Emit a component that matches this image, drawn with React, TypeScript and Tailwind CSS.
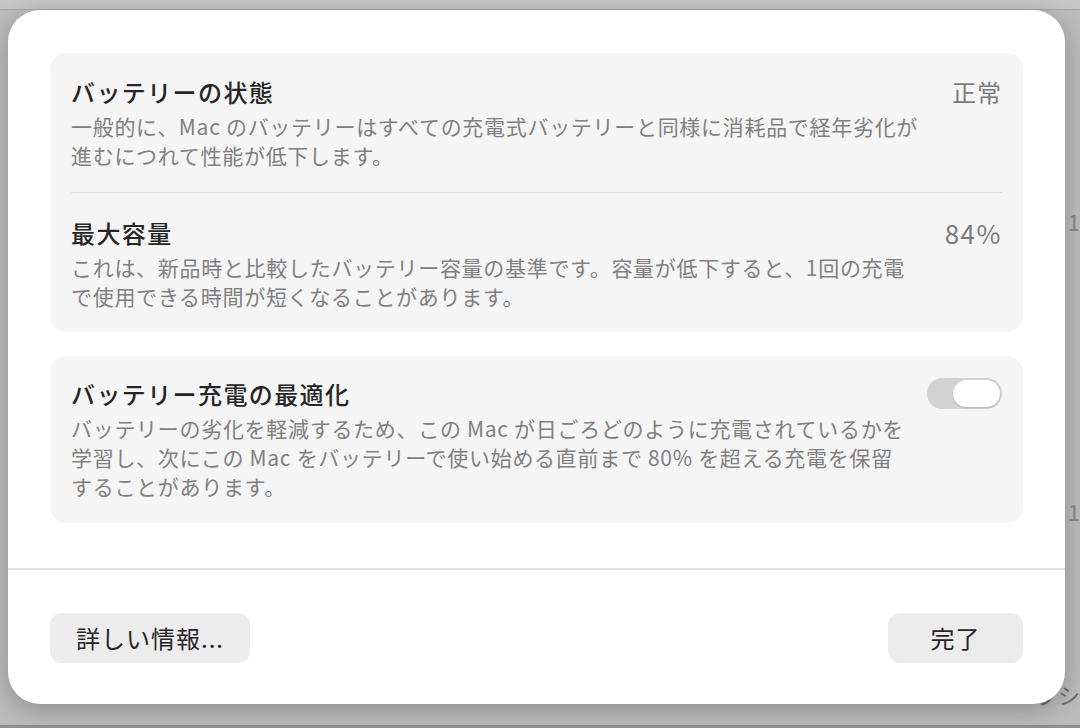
const font = { fontFamily: '"Noto Sans CJK JP", "Noto Sans", sans-serif' };

function Toggle() {
  return (
    <div className="w-[75px] h-[31px] rounded-full bg-[#d2d2d2] flex items-center justify-end pr-[2px] shrink-0">
      <div className="w-[47px] h-[27px] rounded-full bg-white shadow-[0_1px_2px_rgba(0,0,0,0.15)]" />
    </div>
  );
}

function Row({
  title,
  lines,
  value,
  className,
}: {
  title: string;
  lines: string[];
  value?: React.ReactNode;
  className?: string;
}) {
  return (
    <div className={"flex items-start justify-between " + (className ?? "")}>
      <div className="flex flex-col">
        <div className="text-[24px] leading-[32px] font-medium tracking-[1.4px] text-[#252525]">
          {title}
        </div>
        <div className="mt-[4px] text-[21px] leading-[29px] tracking-[0.7px] text-[#808080] whitespace-pre">
          {lines.map((l) => (
            <div key={l}>{l}</div>
          ))}
        </div>
      </div>
      {value}
    </div>
  );
}

export default function App() {
  return (
    <div
      className="w-[1080px] h-[728px] bg-[#bcbcbc] overflow-hidden pt-[10px] pl-[8px] relative"
      style={font}
    >
      <div className="absolute left-0 top-0 w-full h-[10px] bg-[#c6c6c6] border-b border-[#a9a9a9]" />
      <div className="absolute right-0 top-[205px] text-[22px] text-[#8a8a8a]">1</div>
      <div className="absolute right-0 top-[495px] text-[22px] text-[#8a8a8a]">1</div>
      <div className="absolute right-0 top-[678px] text-[22px] text-[#6e6e6e]">プシ</div>
      <div className="absolute left-0 bottom-0 w-full h-[3px] bg-[#8f8f8f]" />

      <div className="relative w-[1057px] h-[694px] bg-white rounded-[32px] shadow-[0_6px_24px_rgba(0,0,0,0.25)] flex flex-col">
        <div className="px-[42px] pt-[43px] flex flex-col gap-[24px]">
          <div className="bg-[#f5f5f5] rounded-[16px] px-[21px] h-[279px] flex flex-col">
            <Row
              className="pt-[23px] pb-[22px] border-b border-[#e0e0e0]"
              title="バッテリーの状態"
              lines={[
                "一般的に、Mac のバッテリーはすべての充電式バッテリーと同様に消耗品で経年劣化が",
                "進むにつれて性能が低下します。",
              ]}
              value={
                <div className="text-[24px] leading-[32px] tracking-[1px] text-[#7a7a7a]">正常</div>
              }
            />
            <Row
              className="pt-[24px]"
              title="最大容量"
              lines={[
                "これは、新品時と比較したバッテリー容量の基準です。容量が低下すると、1回の充電",
                "で使用できる時間が短くなることがあります。",
              ]}
              value={
                <div className="text-[26px] leading-[32px] tracking-[1.5px] text-[#7a7a7a]">84%</div>
              }
            />
          </div>

          <div className="bg-[#f5f5f5] rounded-[16px] px-[21px] h-[167px] flex flex-col">
            <Row
              className="pt-[22px]"
              title="バッテリー充電の最適化"
              lines={[
                "バッテリーの劣化を軽減するため、この Mac が日ごろどのように充電されているかを",
                "学習し、次にこの Mac をバッテリーで使い始める直前まで 80% を超える充電を保留",
                "することがあります。",
              ]}
              value={<Toggle />}
            />
          </div>
        </div>

        <div className="mt-[45px] h-[2px] bg-[#e3e3e3]" />

        <div className="flex justify-between px-[42px] pt-[43px]">
          <button className="h-[50px] px-[26px] rounded-[12px] bg-[#ececec] text-[24px] tracking-[1px] text-[#262626]">
            詳しい情報...
          </button>
          <button className="h-[50px] w-[135px] rounded-[12px] bg-[#ececec] text-[24px] tracking-[1px] text-[#262626]">
            完了
          </button>
        </div>
      </div>
    </div>
  );
}
